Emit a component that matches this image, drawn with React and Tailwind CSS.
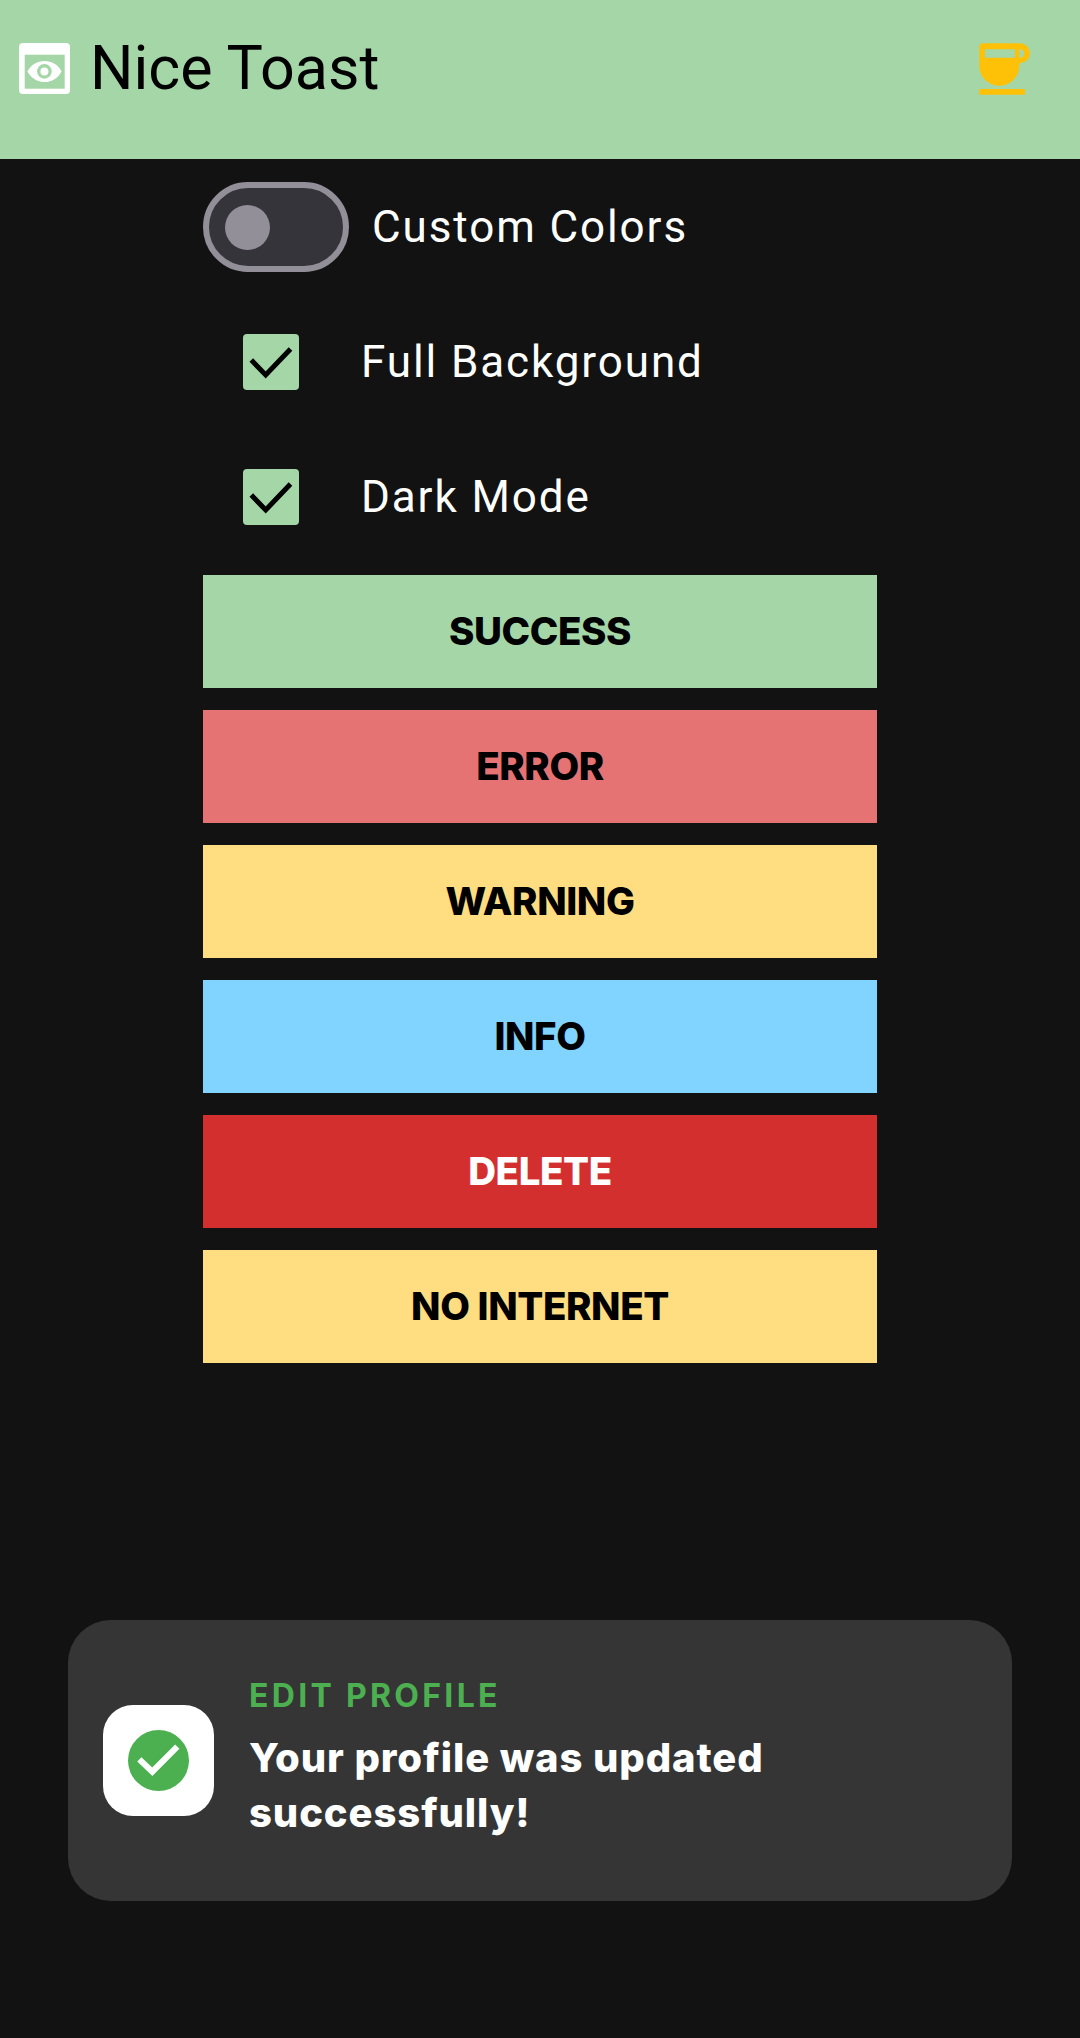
import React from 'react';

const buttons = [
    { label: 'SUCCESS', cls: 'bg-[#a5d6a7] text-black' },
    { label: 'ERROR', cls: 'bg-[#e57373] text-black' },
    { label: 'WARNING', cls: 'bg-[#ffdd80] text-black' },
    { label: 'INFO', cls: 'bg-[#80d4ff] text-black' },
    { label: 'DELETE', cls: 'bg-[#d32f2f] text-white' },
    { label: 'NO INTERNET', cls: 'bg-[#ffdd80] text-black' },
];

const EyeIcon = () => (
    <svg width="51" height="51" viewBox="0 0 51 51" className="shrink-0">
        <rect width="51" height="51" rx="4" fill="#fff" />
        <rect x="5.7" y="11.7" width="40" height="34" fill="#a5d6a7" />
        <path d="M8.4 28.4C12 21.6 18.4 18 25.6 18s13.4 3.6 17 10.4C39 35 32.8 39 25.6 39S12 35 8.4 28.4Z" fill="#fff" />
        <circle cx="25.4" cy="28.4" r="7.3" fill="#a5d6a7" />
        <circle cx="25.4" cy="28.4" r="4" fill="#fff" />
    </svg>
);

const CupIcon = () => (
    <svg width="51" height="52" viewBox="39 23 51 52" className="shrink-0">
        <path
            fillRule="evenodd"
            fill="#ffc107"
            d="M43.3 23.3H80A10 10 0 0 1 80 43.3H79.3V46A20 19.7 0 0 1 39.3 46V27.3A4 4 0 0 1 43.3 23.3ZM45 29.3V37.7H75V29.3ZM79.3 29.3V37.7H80A4.2 4.2 0 0 0 80 29.3Z"
        />
        <rect x="39.3" y="69" width="45.7" height="5.7" fill="#ffc107" />
    </svg>
);

const CheckRow = ({ label }) => (
    <div className="flex items-center h-[135px] pl-[40px]">
        <div className="w-[56px] h-[56px] bg-[#a5d6a7] rounded-[4px] shrink-0">
            <svg width="56" height="56" viewBox="0 0 56 56">
                <path d="M8.3 26L22.7 41L47.5 15" fill="none" stroke="#000" strokeWidth="5" />
            </svg>
        </div>
        <span className="ml-[62px] text-white text-[44px] tracking-[1.9px] font-['Roboto',sans-serif]">{label}</span>
    </div>
);

export default function App() {
    return (
        <div className="h-[2038px] bg-[#121212] overflow-hidden">
            <header className="h-[159px] bg-[#a5d6a7] flex items-start justify-between pl-[19px] pr-[50px]">
                <div className="flex items-start pt-[43px]">
                    <EyeIcon />
                    <span className="ml-[20px] mt-[-20px] text-[61px] leading-[90px] text-black font-['Roboto',sans-serif]">Nice Toast</span>
                </div>
                <div className="pt-[43px]">
                    <CupIcon />
                </div>
            </header>

            <main className="w-[674px] ml-[203px]">
                <div className="flex items-center mt-[23px] h-[90px]">
                    <div className="w-[146px] h-[90px] rounded-full border-[6px] border-[#938f99] bg-[#36343b] flex items-center pl-[16px] shrink-0">
                        <div className="w-[45px] h-[45px] rounded-full bg-[#938f99]"></div>
                    </div>
                    <span className="ml-[23px] text-white text-[44px] tracking-[1.9px] font-['Roboto',sans-serif]">Custom Colors</span>
                </div>

                <div className="mt-[22px]">
                    <CheckRow label="Full Background" />
                    <CheckRow label="Dark Mode" />
                </div>

                <div className="flex flex-col gap-[22px] mt-[11px]">
                    {buttons.map((b) => (
                        <button
                            key={b.label}
                            className={`h-[113px] w-full flex items-center justify-center text-[38.5px] tracking-[-0.4px] font-extrabold font-['Inter',sans-serif] ${b.cls}`}
                        >
                            {b.label}
                        </button>
                    ))}
                </div>
            </main>

            <section className="mx-[68px] mt-[257px] h-[281px] rounded-[43px] bg-[#353535] flex items-center pl-[35px] pr-[35px]">
                <div className="w-[111px] h-[111px] rounded-[30px] bg-white flex items-center justify-center shrink-0">
                    <svg width="61" height="61" viewBox="0 0 61 61">
                        <circle cx="30.5" cy="30.5" r="30.5" fill="#4caf50" />
                        <path d="M11.3 29.3L24.3 41.7L49.3 16.7" fill="none" stroke="#fff" strokeWidth="6" />
                    </svg>
                </div>
                <div className="ml-[35px] pb-[6px] flex flex-col">
                    <span className="text-[#4caf50] text-[32px] leading-[40px] font-bold tracking-[3.3px] font-['Inter',sans-serif]">EDIT PROFILE</span>
                    <span className="mt-[14px] text-white text-[40px] leading-[55px] tracking-[0.9px] font-extrabold font-['Inter',sans-serif]">
                        Your profile was updated
                        <br />
                        successfully!
                    </span>
                </div>
            </section>
        </div>
    );
}
